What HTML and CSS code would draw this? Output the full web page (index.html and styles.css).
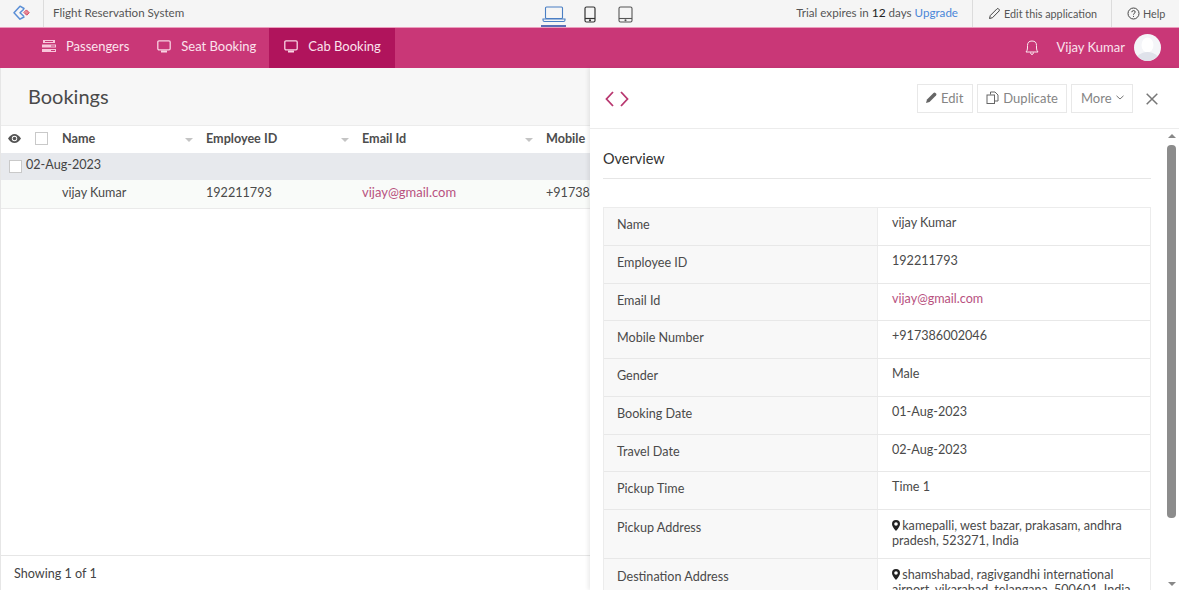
FILE: index.html
```html
<!DOCTYPE html>
<html lang="en">
<head>
  <meta charset="UTF-8">
  <meta name="viewport" content="width=device-width, initial-scale=1">
  <title>Flight Reservation System</title>
  <link rel="stylesheet" href="styles.css">
</head>
<body>
  <header class="topbar">
    <div class="logo">
      <svg width="20" height="20" viewBox="0 0 20 20" fill="none" stroke-linejoin="round" stroke-linecap="round">
        <path d="M11 5.500 L7 3.200 L1 9.700 L7 16.200 L11 14" stroke="#5b8fd6" stroke-width="1.500"/>
        <path d="M10.500 6.500 L7 9.700 L10.500 13" stroke="#5b8fd6" stroke-width="1.500"/>
        <path d="M13.700 7.200 L16.200 9.700 L13.700 12.200 L11.200 9.700 Z" fill="#e58a96" stroke="#d8405a" stroke-width="1"/>
      </svg>
    </div>
    <div class="app-name">Flight Reservation System</div>
    <div class="devices">
      <div class="device active">
        <svg width="24" height="17" viewBox="0 0 24 17" fill="none" stroke="#4a7fc4" stroke-width="1.100">
          <rect x="3.500" y="1" width="17" height="11.500" rx="1"/>
          <path d="M1 13 H23 V14 Q23 15.500 21.500 15.500 H2.500 Q1 15.500 1 14 Z"/>
        </svg>
      </div>
      <div class="device">
        <svg width="12" height="17" viewBox="0 0 12 17" fill="none" stroke="#333" stroke-width="1.200">
          <rect x="1" y="1" width="10" height="15" rx="1.500"/>
          <path d="M1 12.500 H11"/>
          <circle cx="6" cy="14.300" r=".5"/>
        </svg>
      </div>
      <div class="device">
        <svg width="15" height="17" viewBox="0 0 15 17" fill="none" stroke="#555" stroke-width="1.100">
          <rect x="1" y="1" width="13" height="15" rx="1.500"/>
          <path d="M1 12.500 H14"/>
          <circle cx="7.500" cy="14.300" r=".5"/>
        </svg>
      </div>
    </div>
    <div class="trial">Trial expires in <b>12</b> days <a href="#">Upgrade</a></div>
    <div class="top-link edit-app">
      <svg width="13" height="13" viewBox="0 0 13 13" fill="none" stroke="#444" stroke-width="1">
        <path d="M1.500 11.500 L2.300 8.500 L9 1.800 Q9.800 1.200 10.600 1.900 L11.100 2.400 Q11.700 3.200 11.100 4 L4.500 10.700 Z"/>
      </svg>
      Edit this application
    </div>
    <div class="top-link help">
      <svg width="13" height="13" viewBox="0 0 13 13" fill="none" stroke="#444" stroke-width="1">
        <circle cx="6.500" cy="6.500" r="5.500"/>
        <path d="M4.800 5.200 Q4.900 3.600 6.500 3.600 Q8.200 3.600 8.200 5 Q8.200 5.900 7.200 6.400 Q6.500 6.800 6.500 7.700"/>
        <path d="M6.500 8.900 V9.900"/>
      </svg>
      Help
    </div>
  </header>

  <nav class="navbar">
    <div class="nav-item">
      <svg width="14" height="12" viewBox="0 0 14 12" fill="#f8c6da">
        <path d="M1 0 H13 V3 H1 Z M0 4.500 H14 V7.500 H0 Z M0 9 H14 V12 H0 Z M3 1 V2 H11 V1 Z M9 5.500 V6.500 H13 V5.500 Z M9 10 V11 H13 V10 Z" fill-rule="evenodd"/>
      </svg>
      Passengers
    </div>
    <div class="nav-item">
      <svg width="14" height="13" viewBox="0 0 14 13" fill="none" stroke="#f8d3e2">
        <rect x=".8" y=".8" width="12.400" height="9" rx="1.200" stroke-width="1.300"/>
        <path d="M4 11.500 H10" stroke-width="2"/>
      </svg>
      Seat Booking
    </div>
    <div class="nav-item active">
      <svg width="14" height="13" viewBox="0 0 14 13" fill="none" stroke="#f8d3e2">
        <rect x=".8" y=".8" width="12.400" height="9" rx="1.200" stroke-width="1.300"/>
        <path d="M4 11.500 H10" stroke-width="2"/>
      </svg>
      Cab Booking
    </div>
    <div class="nav-user">
      <svg width="14" height="16" viewBox="0 0 14 16" fill="none" stroke="#fbeaf1" stroke-width="1">
        <path d="M1 12 Q2.500 10.500 2.500 8 V5.500 Q2.500 1 7 1 Q11.500 1 11.500 5.500 V8 Q11.500 10.500 13 12 Z"/>
        <path d="M5.500 12.500 Q5.700 14.500 7 14.500 Q8.300 14.500 8.500 12.500"/>
      </svg>
      <span class="user-name">Vijay Kumar</span>
      <svg class="avatar" width="27" height="27" viewBox="0 0 27 27">
        <circle cx="13.500" cy="13.500" r="13.500" fill="#f4f5f8"/>
        <ellipse cx="13.500" cy="11" rx="6" ry="7.500" fill="#ffffff"/>
        <path d="M3.500 22 Q8 18 13.500 18 Q19 18 23.500 22 Q19 27 13.500 27 Q8 27 3.500 22 Z" fill="#dfe2ea"/>
      </svg>
    </div>
  </nav>

  <main class="main">
    <section class="list-panel">
      <h1 class="list-title">Bookings</h1>
      <div class="list-table">
        <div class="list-row head">
          <div class="col-eye">
            <svg width="13" height="9" viewBox="0 0 13 9" fill="#555">
              <path d="M0 4.500 Q3 0 6.500 0 Q10 0 13 4.500 Q10 9 6.500 9 Q3 9 0 4.500 Z M6.500 1.800 A2.700 2.700 0 1 0 6.500 7.200 A2.700 2.700 0 1 0 6.500 1.800 Z" fill-rule="evenodd"/>
              <circle cx="6.500" cy="4.500" r="1.800"/>
            </svg>
          </div>
          <div class="col-check"><span class="checkbox"></span></div>
          <div class="col col-name">Name<i class="sort"></i></div>
          <div class="col col-emp">Employee ID<i class="sort"></i></div>
          <div class="col col-mail">Email Id<i class="sort"></i></div>
          <div class="col col-mobile">Mobile</div>
        </div>
        <div class="group-row"><span class="checkbox"></span>02-Aug-2023</div>
        <div class="list-row item">
          <div class="col-eye"></div>
          <div class="col-check"></div>
          <div class="col col-name">vijay Kumar</div>
          <div class="col col-emp">192211793</div>
          <div class="col col-mail"><a href="#">vijay@gmail.com</a></div>
          <div class="col col-mobile">+917386002046</div>
        </div>
      </div>
      <footer class="list-footer">Showing 1 of 1</footer>
    </section>

    <section class="detail-panel">
      <div class="detail-head">
        <div class="pager">
          <svg width="24" height="16" viewBox="0 0 24 16" fill="none" stroke="#b8376f" stroke-width="1.800">
            <path d="M8 1 L1.500 8 L8 15"/>
            <path d="M16 1 L22.500 8 L16 15"/>
          </svg>
        </div>
        <button class="btn">
          <svg width="11" height="11" viewBox="0 0 11 11" fill="#666"><path d="M0 11 L1 7.500 L7.500 1 Q8.500 0 9.500 1 L10 1.500 Q11 2.500 10 3.500 L3.500 10 Z"/></svg>
          Edit
        </button>
        <button class="btn">
          <svg width="13" height="13" viewBox="0 0 13 13" fill="none" stroke="#666" stroke-width="1">
            <path d="M4.500 3.500 V1 H9 L12 4 V10 H8.500"/>
            <rect x="1" y="4" width="7.500" height="8.500"/>
          </svg>
          Duplicate
        </button>
        <button class="btn">More
          <svg width="8" height="5" viewBox="0 0 8 5" fill="none" stroke="#777" stroke-width="1"><path d="M.5 .8 L4 4 L7.500 .8"/></svg>
        </button>
        <svg class="close" width="12" height="12" viewBox="0 0 12 12" stroke="#777" stroke-width="1.500"><path d="M.7 .7 L11.300 11.300 M11.300 .7 L.7 11.300"/></svg>
      </div>
      <div class="detail-scroll">
        <div class="detail-body">
          <h2 class="overview">Overview</h2>
          <div class="fields">
            <div class="field"><div class="label">Name</div><div class="value">vijay Kumar</div></div>
            <div class="field"><div class="label">Employee ID</div><div class="value">192211793</div></div>
            <div class="field"><div class="label">Email Id</div><div class="value"><a href="#">vijay@gmail.com</a></div></div>
            <div class="field"><div class="label">Mobile Number</div><div class="value">+917386002046</div></div>
            <div class="field"><div class="label">Gender</div><div class="value">Male</div></div>
            <div class="field"><div class="label">Booking Date</div><div class="value">01-Aug-2023</div></div>
            <div class="field"><div class="label">Travel Date</div><div class="value">02-Aug-2023</div></div>
            <div class="field"><div class="label">Pickup Time</div><div class="value">Time 1</div></div>
            <div class="field tall">
              <div class="label">Pickup Address</div>
              <div class="value">
                <svg class="pin" width="8" height="11" viewBox="0 0 8 11"><path d="M4 0 A4 4 0 0 1 8 4 Q8 6.500 4 11 Q0 6.500 0 4 A4 4 0 0 1 4 0 Z M4 2.200 A1.800 1.800 0 1 0 4 5.800 A1.800 1.800 0 1 0 4 2.200 Z" fill="#222" fill-rule="evenodd"/></svg>
                kamepalli, west bazar, prakasam, andhra pradesh, 523271, India
              </div>
            </div>
            <div class="field tall">
              <div class="label">Destination Address</div>
              <div class="value">
                <svg class="pin" width="8" height="11" viewBox="0 0 8 11"><path d="M4 0 A4 4 0 0 1 8 4 Q8 6.500 4 11 Q0 6.500 0 4 A4 4 0 0 1 4 0 Z M4 2.200 A1.800 1.800 0 1 0 4 5.800 A1.800 1.800 0 1 0 4 2.200 Z" fill="#222" fill-rule="evenodd"/></svg>
                shamshabad, ragivgandhi international airport, vikarabad, telangana, 500601, India
              </div>
            </div>
          </div>
        </div>
        <div class="scrollbar">
          <i class="arrow up"></i>
          <div class="thumb"></div>
          <i class="arrow down"></i>
        </div>
      </div>
    </section>
  </main>
</body>
</html>
```

FILE: styles.css
```css
* {
  box-sizing: border-box;
}
html, body {
  height: 100%;
}
body {
  margin: 0;
  height: 590px;
  overflow: hidden;
  display: flex;
  flex-direction: column;
  background: #fff;
  color: #333;
  font-family: Lato, "Open Sans", sans-serif;
  font-size: 12.600px;
}
a {
  text-decoration: none;
}

/* top strip */
.topbar {
  height: 28px;
  flex: none;
  display: flex;
  align-items: center;
  background: #f5f5f5;
  border-bottom: 1px solid #ec9dbd;
  font-size: 11.600px;
  color: #555;
}
.logo {
  width: 44px;
  height: 27px;
  padding: 3px 0 0 13px;
  border-right: 1px solid #dcdcdc;
}
.app-name {
  width: 497px;
  padding: 0 0 2px 9px;
  color: #555;
}
.devices {
  display: flex;
  align-items: center;
  height: 27px;
  gap: 11px;
}
.device {
  width: 25px;
  height: 27px;
  padding-top: 6px;
  display: flex;
  justify-content: center;
  border-bottom: 2px solid transparent;
}
.device.active {
  border-bottom-color: #5a6fb5;
}
.trial {
  margin-left: auto;
  padding: 0 14px 3px 0;
  color: #555;
}
.trial b {
  font-weight: 400;
  color: #222;
  font-size: 12px;
}
.trial a {
  color: #4a86d8;
}
.top-link {
  height: 27px;
  display: flex;
  align-items: center;
  gap: 3px;
  border-left: 1px solid #dcdcdc;
  font-size: 10.800px;
  color: #555;
}
.edit-app {
  width: 139px;
  padding-left: 15px;
}
.help {
  width: 68px;
  padding-left: 15px;
}

/* pink nav */
.navbar {
  height: 40px;
  flex: none;
  display: flex;
  align-items: stretch;
  padding-left: 28px;
  background: #c93777;
  color: #fbe3ed;
  font-size: 13px;
}
.nav-item {
  display: flex;
  align-items: center;
  gap: 10px;
  padding: 0 14px 4px;
}
.nav-item.active {
  background: #b0145c;
  padding-left: 15px;
}
.nav-item:nth-child(2) {
  padding-right: 13px;
}
.nav-user {
  margin-left: auto;
  display: flex;
  align-items: center;
  padding: 0 18px 1px 0;
}
.user-name {
  margin: 0 9px 0 18px;
  padding-bottom: 2px;
}

.main {
  flex: 1;
  min-height: 0;
  display: flex;
}

/* left list */
.list-panel {
  width: 590px;
  flex: none;
  display: flex;
  flex-direction: column;
  overflow: hidden;
  background: #fff;
  border-left: 1px solid #e6e6e6;
}
.list-title {
  margin: 0;
  height: 58px;
  padding: 16px 0 0 27px;
  flex: none;
  background: #f7f7f7;
  border-bottom: 1px solid #ececec;
  font-size: 20px;
  font-weight: 400;
  color: #4a4a4a;
}
.list-table {
  flex: 1;
  min-width: 700px;
}
.list-row {
  display: flex;
  align-items: center;
}
.list-row.head {
  height: 27px;
  padding-bottom: 2px;
  font-weight: 700;
  color: #4d4d4d;
}
.list-row.item {
  height: 29px;
  padding-bottom: 4px;
  background: #f9fbf9;
  border-bottom: 1px solid #eaeaea;
  color: #4a4a4a;
}
.col-eye {
  width: 26px;
  padding-left: 7px;
  line-height: 0;
}
.col-check {
  width: 28px;
  padding-left: 8px;
  line-height: 0;
}
.checkbox {
  display: inline-block;
  width: 13px;
  height: 13px;
  background: #fff;
  border: 1px solid #c9c9c9;
}
.col {
  position: relative;
  padding-left: 7px;
}
.col-name {
  width: 144px;
}
.col-emp {
  width: 156px;
}
.col-mail {
  width: 184px;
}
.col-mobile {
  width: 160px;
}
.col-mail a {
  color: #b8527f;
  font-size: 13px;
}
.sort {
  position: absolute;
  right: 6px;
  top: 7px;
  border: 4px solid transparent;
  border-top-color: #c4c4c4;
  border-bottom-width: 0;
}
.group-row {
  height: 27px;
  display: flex;
  align-items: center;
  gap: 4px;
  padding: 0 0 4px 8px;
  background: #e7e9ed;
  color: #444;
}
.group-row .checkbox {
  margin-top: 4px;
}
.list-footer {
  height: 35px;
  padding: 10px 0 0 13px;
  flex: none;
  border-top: 1px solid #e6e6e6;
  color: #444;
}

/* right detail */
.detail-panel {
  flex: 1;
  min-width: 0;
  display: flex;
  flex-direction: column;
  background: #fff;
  box-shadow: -2px 0 4px rgba(0, 0, 0, 0.08);
  z-index: 1;
}
.detail-head {
  height: 61px;
  flex: none;
  display: flex;
  align-items: center;
  gap: 4px;
  padding: 1px 21px 0 15px;
  border-bottom: 1px solid #ececec;
}
.pager {
  margin-right: auto;
  line-height: 0;
}
.btn {
  height: 29px;
  padding: 0 8.500px 2px;
  display: flex;
  align-items: center;
  gap: 4px;
  background: #fff;
  border: 1px solid #e8e8e8;
  font-family: inherit;
  font-size: 13px;
  color: #858585;
}
.close {
  margin-left: 9px;
}
.detail-scroll {
  flex: 1;
  min-height: 0;
  display: flex;
  overflow: hidden;
}
.detail-body {
  flex: 1;
  min-width: 0;
  padding: 0 14px 0 13px;
}
.overview {
  margin: 0;
  height: 50px;
  padding-top: 21px;
  border-bottom: 1px solid #e6e6e6;
  font-size: 14.500px;
  font-weight: 400;
  color: #333;
}
.fields {
  margin-top: 28px;
  border: 1px solid #ececec;
  border-bottom: 0;
}
.field {
  display: flex;
  min-height: 37.750px;
  border-bottom: 1px solid #e8e8e8;
}
.label {
  width: 274px;
  flex: none;
  padding: 9px 0 0 13px;
  background: #f8f8f8;
  border-right: 1px solid #ececec;
  color: #4a4a4a;
}
.value {
  flex: 1;
  padding: 7px 14px 0;
  line-height: 15px;
  color: #4a4a4a;
}
.field.tall {
  min-height: 49px;
}
.field.tall .label {
  padding-top: 10px;
}
.field.tall .value {
  padding-top: 8px;
}
.value a {
  color: #b8527f;
}
.pin {
  vertical-align: -1px;
  margin-right: -1px;
}
.scrollbar {
  width: 12px;
  flex: none;
  margin-right: 2px;
  position: relative;
}
.thumb {
  position: absolute;
  top: 16px;
  left: 2px;
  width: 9px;
  height: 373px;
  background: #8c8c8c;
  border-radius: 4px;
}
.arrow {
  position: absolute;
  left: 3px;
  border: 4px solid transparent;
}
.arrow.up {
  top: 5px;
  border-top-width: 0;
  border-bottom-color: #888;
}
.arrow.down {
  bottom: 4px;
  border-bottom-width: 0;
  border-top-color: #888;
}
```
